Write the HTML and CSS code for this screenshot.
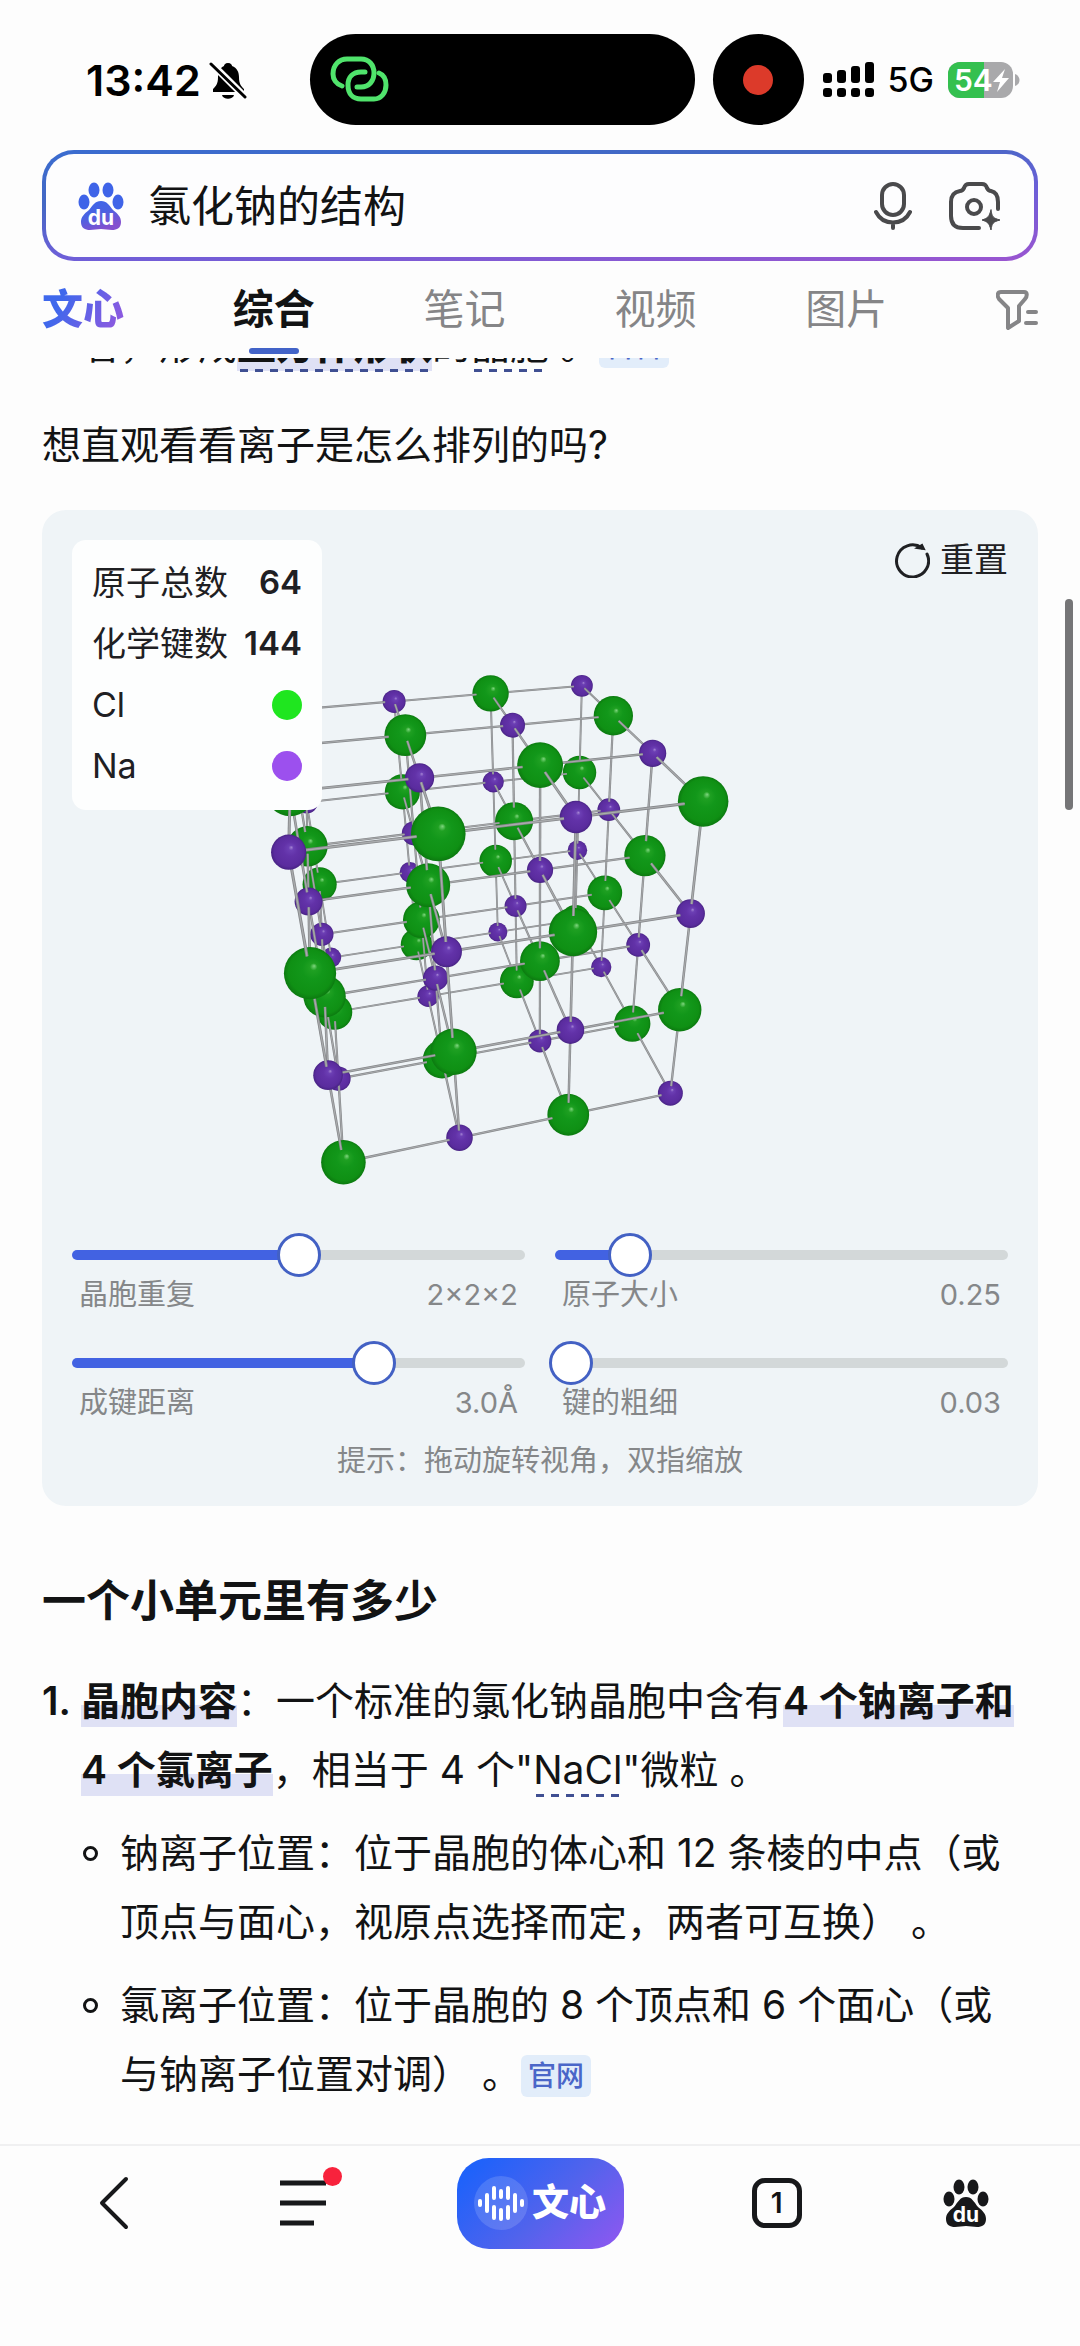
FILE: index.html
```html
<!DOCTYPE html>
<html lang="zh-CN">
<head>
  <meta charset="UTF-8">
  <meta name="viewport" content="width=device-width, initial-scale=1.0">
  <title>氯化钠的结构</title>
  <link rel="stylesheet" href="styles.css">
</head>
<body>
  <header class="header">
    <div class="status-bar">
      <div class="status-left">
        <span class="time">13:42</span>
        <svg class="bell" viewBox="0 0 38 38" width="38" height="38">
          <path d="M19 2c3 0 4 2 4 3 5 2 7 6 7 11 0 7 2 9 5 12v3H4v-3c3-3 5-5 5-12 0-5 2-9 6-11 0-1 1-3 4-3z"/>
          <path d="M13 34h12c-1 5-11 5-12 0z"/>
          <path d="M1 1l36 36" stroke="#fdfdfd" stroke-width="7"/>
          <path d="M2 3l34 33" stroke="#000" stroke-width="3" stroke-linecap="round"/>
        </svg>
      </div>
      <div class="island">
        <svg viewBox="0 0 60 47" width="60" height="47" fill="none" stroke="#50e36c" stroke-width="5" stroke-linecap="round">
          <path d="M12 30C6 28 3 23 3 18 3 9 9 3 17 3h14c8 0 13 6 13 14s-5 14-13 14h-4"/>
          <path d="M35 16h-4c-8 0-13 5-13 13 0 9 5 14 13 14h13c7 0 12-6 12-14 0-6-2-10-7-12"/>
        </svg>
      </div>
      <div class="record"><span class="record-dot"></span></div>
      <div class="status-right">
        <svg viewBox="0 0 52 36" width="52" height="36">
          <rect x="1" y="11" width="9" height="10" rx="3"/>
          <rect x="15" y="8" width="9" height="13" rx="3"/>
          <rect x="29" y="4" width="9" height="17" rx="3"/>
          <rect x="43" y="0" width="9" height="21" rx="3"/>
          <rect x="1" y="26" width="9" height="9" rx="3"/>
          <rect x="15" y="26" width="9" height="9" rx="3"/>
          <rect x="29" y="26" width="9" height="9" rx="3"/>
          <rect x="43" y="26" width="9" height="9" rx="3"/>
        </svg>
        <span class="network">5G</span>
        <svg viewBox="0 0 72 36" width="72" height="36">
          <rect x="0" y="0" width="65" height="36" rx="12" fill="#a9a9ab"/>
          <path d="M36 0H12a12 12 0 0 0-12 12v12a12 12 0 0 0 12 12h24z" fill="#34c04f"/>
          <path d="M67 12c6 2 6 10 0 12z" fill="#a9a9ab"/>
          <text x="6" y="29" class="battery-text">54</text>
          <path d="M57 7L45 20h7l-3 10 12-14h-7z" fill="#fff"/>
        </svg>
      </div>
    </div>

    <form class="search">
      <svg viewBox="0 0 46 48" width="46" height="48">
        <defs>
          <linearGradient id="paw" x1="0" y1="0" x2="0.5" y2="1">
            <stop offset="0" stop-color="#3a66ea"/>
            <stop offset="0.5" stop-color="#4a62e2"/>
            <stop offset="1" stop-color="#8450cf"/>
          </linearGradient>
        </defs>
        <g fill="#3f64e8">
          <ellipse cx="16" cy="8" rx="5.5" ry="7.5"/>
          <ellipse cx="30" cy="8" rx="5.5" ry="7.5"/>
          <ellipse cx="6" cy="20" rx="5.5" ry="7.5"/>
          <ellipse cx="40" cy="20" rx="5.5" ry="7.5"/>
        </g>
        <path fill="url(#paw)" d="M23 19c6 0 8 4 12 9 5 4 8 7 8 12 0 6-4 8-9 8-4 0-7-1-11-1s-7 1-11 1c-5 0-9-2-9-8 0-5 3-8 8-12 4-5 6-9 12-9z"/>
        <text x="23" y="43" class="paw-text">du</text>
      </svg>
      <input class="search-input" type="text" value="氯化钠的结构" aria-label="搜索">
      <button class="icon-button" type="button" aria-label="语音">
        <svg viewBox="0 0 38 50" width="38" height="50" fill="none" stroke="#4a4a4c" stroke-width="4" stroke-linecap="round">
          <rect x="8" y="3" width="22" height="31" rx="11"/>
          <path d="M2 31c7 14 27 14 34 0M19 42v5"/>
        </svg>
      </button>
      <button class="icon-button" type="button" aria-label="拍照">
        <svg viewBox="0 0 54 50" width="54" height="50" fill="none" stroke="#4a4a4c" stroke-width="4" stroke-linecap="round">
          <path d="M31 47H15C7 47 3 43 3 35V21c0-7 3-10 9-11 2 0 3-1 4-3 1-3 2-4 5-4h13c3 0 4 1 5 4 1 2 2 3 4 3 5 1 7 5 7 11v7"/>
          <circle cx="26" cy="26" r="7"/>
          <path d="M43 29c1 7 2 8 9 10-7 2-8 3-9 10-2-7-3-8-9-10 6-2 7-3 9-10z" fill="#4a4a4c" stroke-width="1"/>
        </svg>
      </button>
    </form>

    <nav class="tabs">
      <a class="tab tab-ai" href="#">文心</a>
      <a class="tab active" href="#">综合</a>
      <a class="tab" href="#">笔记</a>
      <a class="tab" href="#">视频</a>
      <a class="tab" href="#">图片</a>
      <button class="icon-button" type="button" aria-label="筛选">
        <svg viewBox="0 0 42 40" width="42" height="40" fill="none" stroke="#858587" stroke-width="4" stroke-linecap="round" stroke-linejoin="round">
          <path d="M5 2h23c4 0 3 5 1 7l-6 7v15l-11 7V18L3 9C1 6 1 2 5 2z"/>
          <path d="M32 22h8M30 33h10"/>
        </svg>
      </button>
    </nav>
  </header>

  <main class="content">
    <p class="previous">着，形成<span class="mark"><b class="term">立方体形状</b></span>的<span class="term">晶胞</span> 。<a class="source" href="#">百科</a></p>
    <p class="question">想直观看看离子是怎么排列的吗?</p>

    <section class="viewer">
      <svg class="scene" id="scene" viewBox="0 0 996 723"></svg>

      <dl class="legend">
        <div><dt>原子总数</dt><dd>64</dd></div>
        <div><dt>化学键数</dt><dd>144</dd></div>
        <div><dt>Cl</dt><dd class="dot dot-cl"></dd></div>
        <div><dt>Na</dt><dd class="dot dot-na"></dd></div>
      </dl>

      <button class="reset" type="button">
        <svg viewBox="0 0 36 36" width="36" height="36" fill="none" stroke="#1f2023" stroke-width="3" stroke-linecap="round">
          <path d="M33 12a16 16 0 1 1-5-6"/>
          <path d="M23 6l7 1-2-4z" fill="#1f2023" stroke-width="2"/>
        </svg>
        重置
      </button>

      <div class="controls">
        <div class="control">
          <div class="track" style="--fill: 50%"><input type="range" id="repeat" min="1" max="3" step="1" value="2"></div>
          <div class="control-info"><label for="repeat">晶胞重复</label><output>2×2×2</output></div>
        </div>
        <div class="control">
          <div class="track" style="--fill: 16%"><input type="range" id="size" min="0" max="100" value="14"></div>
          <div class="control-info"><label for="size">原子大小</label><output>0.25</output></div>
        </div>
        <div class="control">
          <div class="track" style="--fill: 66%"><input type="range" id="distance" min="0" max="100" value="68"></div>
          <div class="control-info"><label for="distance">成键距离</label><output>3.0Å</output></div>
        </div>
        <div class="control">
          <div class="track" style="--fill: 0%"><input type="range" id="thickness" min="0" max="100" value="0"></div>
          <div class="control-info"><label for="thickness">键的粗细</label><output>0.03</output></div>
        </div>
      </div>
      <p class="hint">提示：拖动旋转视角，双指缩放</p>
    </section>

    <h2>一个小单元里有多少</h2>
    <ol class="list">
      <li>
        <div>
          <p><b class="mark">晶胞内容</b>：一个标准的氯化钠晶胞中含有<b class="mark">4 个钠离子和 4 个氯离子</b>，相当于 4 个"<span class="term">NaCl</span>"微粒 。</p>
          <ul class="sublist">
            <li>钠离子位置：位于晶胞的体心和 12 条棱的中点（或顶点与面心，视原点选择而定，两者可互换） 。</li>
            <li>氯离子位置：位于晶胞的 8 个顶点和 6 个面心（或与钠离子位置对调） 。<a class="source" href="#">官网</a></li>
          </ul>
        </div>
      </li>
    </ol>
  </main>

  <div class="scrollbar"></div>

  <nav class="bottom-nav">
    <button class="nav-button" type="button" aria-label="返回">
      <svg viewBox="0 0 30 54" width="30" height="54" fill="none" stroke="#17181a" stroke-width="4" stroke-linecap="round" stroke-linejoin="round">
        <path d="M27 3L3 27l24 24"/>
      </svg>
    </button>
    <button class="nav-button" type="button" aria-label="菜单">
      <svg viewBox="0 0 46 46" width="46" height="46" stroke="#17181a" stroke-width="5">
        <path d="M0 3h46M0 23h46M0 43h34"/>
      </svg>
      <span class="badge"></span>
    </button>
    <button class="ai-button" type="button">
      <svg viewBox="0 0 54 54" width="54" height="54">
        <circle cx="27" cy="27" r="27" fill="#fff" fill-opacity="0.14"/>
        <path d="M6 25v4M13 19v16M20 12v10M20 31v11M27 15v6M27 34v9M34 12v10M34 31v11M41 19v16M48 25v4" stroke="#fff" stroke-width="4" stroke-linecap="round"/>
      </svg>
      文心
    </button>
    <button class="nav-button" type="button" aria-label="标签页">
      <span class="tab-count">1</span>
    </button>
    <button class="nav-button" type="button" aria-label="首页">
      <svg viewBox="0 0 46 48" width="46" height="48" fill="#17181a">
        <ellipse cx="16" cy="8" rx="5.5" ry="7.5"/>
        <ellipse cx="30" cy="8" rx="5.5" ry="7.5"/>
        <ellipse cx="6" cy="20" rx="5.5" ry="7.5"/>
        <ellipse cx="40" cy="20" rx="5.5" ry="7.5"/>
        <path d="M23 18c6 0 8 5 12 10 5 4 8 7 8 12 0 6-4 8-9 8-4 0-7-1-11-1s-7 1-11 1c-5 0-9-2-9-8 0-5 3-8 8-12 4-5 6-10 12-10z"/>
        <text x="23" y="43" class="paw-text">du</text>
      </svg>
    </button>
  </nav>

  <script src="script.js"></script>
</body>
</html>
```

FILE: styles.css
```css
* {
    box-sizing: border-box;
}

body {
    margin: 0;
    min-height: 100vh;
    display: flex;
    flex-direction: column;
    position: relative;
    background: #fdfdfd;
    color: #121314;
    font-family: Inter, "Noto Sans CJK SC", sans-serif;
    font-size: 39px;
    line-height: 69px;
}

button {
    font: inherit;
    color: inherit;
    background: none;
    border: none;
    padding: 0;
}

a {
    color: inherit;
    text-decoration: none;
}

p,
h2,
dl,
dd,
ol,
ul {
    margin: 0;
    padding: 0;
}

svg {
    display: block;
    flex-shrink: 0;
}

/* status bar */
.header {
    background: #fdfdfd;
    position: relative;
    z-index: 1;
}

.status-bar {
    display: flex;
    align-items: center;
    padding: 34px 60px 25px 86px;
    color: #000;
}

.status-left {
    flex: 1;
    display: flex;
    align-items: center;
    gap: 8px;
}

.time {
    font-size: 43px;
    font-weight: 600;
    line-height: 48px;
}

.island {
    width: 385px;
    height: 91px;
    padding-left: 20px;
    border-radius: 46px;
    background: #000;
    display: flex;
    align-items: center;
}

.record {
    width: 91px;
    height: 91px;
    margin: 0 18px;
    border-radius: 50%;
    background: #000;
    display: flex;
    align-items: center;
    justify-content: center;
}

.record-dot {
    width: 30px;
    height: 30px;
    border-radius: 50%;
    background: #dc3a2a;
}

.status-right {
    display: flex;
    align-items: center;
    gap: 14px;
}

.network {
    font-size: 34px;
    font-weight: 500;
    line-height: 40px;
}

.battery-text {
    font-size: 30px;
    font-weight: 600;
    fill: #fff;
}

/* search */
.search {
    display: flex;
    align-items: center;
    gap: 24px;
    height: 111px;
    margin: 0 42px;
    padding: 0 32px;
    border: 4px solid transparent;
    border-radius: 32px;
    background:
        linear-gradient(#fdfdfe, #fdfdfe) padding-box,
        linear-gradient(176deg, #3a6cd0 0%, #4468c4 30%, #6d5fd8 60%, #9a55d0 100%) border-box;
}

.search-input {
    flex: 1;
    min-width: 0;
    padding: 0;
    border: none;
    outline: none;
    background: none;
    color: #121314;
    font-family: inherit;
    font-size: 43px;
    line-height: 60px;
}

.icon-button + .icon-button {
    margin-left: 12px;
}

.paw-text {
    font-size: 21px;
    font-weight: 700;
    fill: #fff;
    text-anchor: middle;
}

/* tabs */
.tabs {
    display: flex;
    justify-content: space-between;
    align-items: center;
    margin: 0 42px;
    height: 97px;
    font-size: 41px;
    line-height: 97px;
}

.tab {
    position: relative;
    color: #858587;
}

.tab.active {
    color: #121314;
    font-weight: 700;
}

.tab.active::after {
    content: "";
    position: absolute;
    left: 50%;
    bottom: 4px;
    width: 50px;
    height: 6px;
    margin-left: -25px;
    border-radius: 3px;
    background: #4263c8;
}

.tab-ai {
    font-weight: 900;
    background: linear-gradient(120deg, #3f68ec 30%, #8a5ae0 80%);
    background-clip: text;
    color: transparent;
}

/* article */
.content {
    flex: 1;
    padding: 0 42px;
}

.previous {
    margin-top: -48px;
    padding-left: 39px;
}

.question {
    margin: 31px 0;
}

.mark {
    font-weight: 600;
    padding-bottom: 3px;
    background: linear-gradient(transparent 56%, #dfe1f5 56%);
}

.term {
    padding-bottom: 4px;
    background: repeating-linear-gradient(to right, transparent 0 3px, #3f4f92 3px 11px, transparent 11px 15px) bottom / 100% 3px no-repeat;
}

.source {
    display: inline-block;
    padding: 0 7px;
    border-radius: 6px;
    background: #e2edfa;
    color: #4a66c8;
    font-size: 28px;
    font-weight: 500;
    line-height: 42px;
    vertical-align: 2px;
}

/* crystal viewer */
.viewer {
    position: relative;
    border-radius: 24px;
    padding-bottom: 27px;
    background: #eff4f7;
    color: #1f2023;
}

.scene {
    width: 100%;
    height: 723px;
}

.legend {
    position: absolute;
    top: 30px;
    left: 30px;
    width: 250px;
    padding: 12px 20px 14px;
    border-radius: 14px;
    background: #fdfefe;
    font-size: 34px;
    line-height: 61px;
}

.legend div {
    display: flex;
    justify-content: space-between;
    align-items: center;
}

.legend dd {
    font-size: 33px;
    font-weight: 600;
}

.legend .dot {
    width: 30px;
    height: 30px;
    border-radius: 50%;
}

.dot-cl {
    background: #1fe61f;
}

.dot-na {
    background: #9c50ee;
}

.reset {
    position: absolute;
    top: 30px;
    right: 30px;
    display: flex;
    align-items: center;
    gap: 10px;
    font-size: 34px;
    line-height: 40px;
}

.controls {
    display: grid;
    grid-template-columns: 1fr 1fr;
    gap: 28px 30px;
    padding: 0 30px;
}

.track {
    display: flex;
    align-items: center;
    height: 10px;
    margin: 17px 0;
    border-radius: 5px;
    background: linear-gradient(to right, #4262e2 var(--fill), #d3d8d9 var(--fill));
}

/* the thumb overhangs the track a little on both sides */
.track input {
    appearance: none;
    flex: 1;
    height: 44px;
    margin: 0 -6px;
    background: none;
}

.track input::-webkit-slider-thumb {
    appearance: none;
    box-sizing: border-box;
    width: 44px;
    height: 44px;
    border: 3px solid #4361c4;
    border-radius: 50%;
    background: #fff;
}

.control-info {
    display: flex;
    justify-content: space-between;
    padding: 0 7px;
}

.control-info,
.hint {
    color: #858789;
    font-size: 29px;
    line-height: 36px;
}

.hint {
    margin-top: 22px;
    text-align: center;
}

h2 {
    margin: 65px 0 35px;
    font-size: 44px;
    font-weight: 700;
    line-height: 60px;
}

.list,
.sublist {
    list-style: none;
}

.list {
    counter-reset: item;
}

.list > li {
    display: grid;
    grid-template-columns: 39px 1fr;
}

.list > li::before {
    counter-increment: item;
    content: counter(item) ".";
    font-weight: 600;
}

.sublist {
    padding-right: 20px;
}

.sublist > li {
    position: relative;
    margin-top: 14px;
    padding-left: 39px;
}

.sublist > li::before {
    content: "";
    position: absolute;
    top: 28px;
    left: 2px;
    width: 9px;
    height: 9px;
    border: 3px solid #121314;
    border-radius: 50%;
}

.scrollbar {
    position: absolute;
    top: 599px;
    right: 7px;
    width: 8px;
    height: 211px;
    border-radius: 4px;
    background: #757577;
}

/* bottom bar */
.bottom-nav {
    display: flex;
    justify-content: space-between;
    align-items: center;
    height: 202px;
    padding: 0 78px 86px;
    border-top: 2px solid #f0f0f1;
}

.nav-button {
    position: relative;
    width: 72px;
    height: 72px;
    display: flex;
    align-items: center;
    justify-content: center;
}

.badge {
    position: absolute;
    top: 0;
    right: -3px;
    width: 19px;
    height: 19px;
    border-radius: 50%;
    background: #f8223c;
}

.ai-button {
    display: flex;
    align-items: center;
    justify-content: center;
    gap: 4px;
    width: 167px;
    height: 91px;
    border-radius: 32px;
    background: linear-gradient(135deg, #1f62fa 10%, #5263ec 55%, #8a58f0 95%);
    color: #fff;
    font-size: 37px;
    font-weight: 900;
    line-height: 60px;
}

.tab-count {
    width: 50px;
    height: 50px;
    border: 5px solid #17181a;
    border-radius: 13px;
    font-size: 28px;
    font-weight: 600;
    line-height: 40px;
}
```

FILE: script.js
```js
const scene = document.getElementById("scene");
const SVG_NS = "http://www.w3.org/2000/svg";
const SIZE = 4;

const atoms = {
  Cl: { radius: 17.7, reach: 0.15, colors: ["#7fd67f", "#1fa022", "#12971a", "#0f9014", "#0c7a10"] },
  Na: { radius: 10.9, reach: 0.09, colors: ["#a585d4", "#6c3fb4", "#6232a8", "#5a2c9e", "#482384"] }
};

// perspective camera: i goes left, j towards the viewer, k down
function project(i, j, k) {
  const w = 1 - 0.0267 * i - 0.1 * j + 0.058 * k;
  return {
    x: (539.9 - 103.3 * i - 25.7 * j + 28.8 * k) / w,
    y: (175.8 + 2.7 * i + 9.4 * j + 101.9 * k) / w,
    w: w
  };
}

function add(parent, name, attrs) {
  const el = document.createElementNS(SVG_NS, name);
  for (const key in attrs) el.setAttribute(key, attrs[key]);
  parent.appendChild(el);
  return el;
}

const defs = add(scene, "defs", {});
for (const name in atoms) {
  const gradient = add(defs, "radialGradient", { id: "atom-" + name, cx: 0.5, cy: 0.5, r: 0.5, fx: 0.58, fy: 0.36 });
  [0, 0.14, 0.4, 0.85, 1].forEach((offset, n) => {
    add(gradient, "stop", { offset: offset, "stop-color": atoms[name].colors[n] });
  });
}

const kind = (p) => ((p[0] + p[1] + p[2]) % 2 === 0 ? "Na" : "Cl");
const items = [];

for (let i = 0; i < SIZE; i++) {
  for (let j = 0; j < SIZE; j++) {
    for (let k = 0; k < SIZE; k++) {
      const from = [i, j, k];
      const point = project(i, j, k);
      items.push({ type: "atom", kind: kind(from), point: point, depth: point.w });

      for (let axis = 0; axis < 3; axis++) {
        if (from[axis] === SIZE - 1) continue;
        const to = from.slice();
        to[axis]++;
        // the bond starts and ends on the surface of its atoms
        const start = from.slice();
        const end = to.slice();
        start[axis] += atoms[kind(from)].reach;
        end[axis] -= atoms[kind(to)].reach;
        const a = project(...start);
        const b = project(...end);
        items.push({ type: "bond", a: a, b: b, depth: (a.w + b.w) / 2 });
      }
    }
  }
}

items.sort((p, q) => q.depth - p.depth);

items.forEach((item) => {
  if (item.type === "bond") {
    const line = { x1: item.a.x, y1: item.a.y, x2: item.b.x, y2: item.b.y };
    add(scene, "line", { ...line, stroke: "#85878a", "stroke-width": 2 / item.depth });
    add(scene, "line", { ...line, stroke: "#a9abad", "stroke-width": 0.9 / item.depth });
  } else {
    add(scene, "circle", {
      cx: item.point.x,
      cy: item.point.y,
      r: atoms[item.kind].radius / item.depth,
      fill: `url(#atom-${item.kind})`
    });
  }
});
```
